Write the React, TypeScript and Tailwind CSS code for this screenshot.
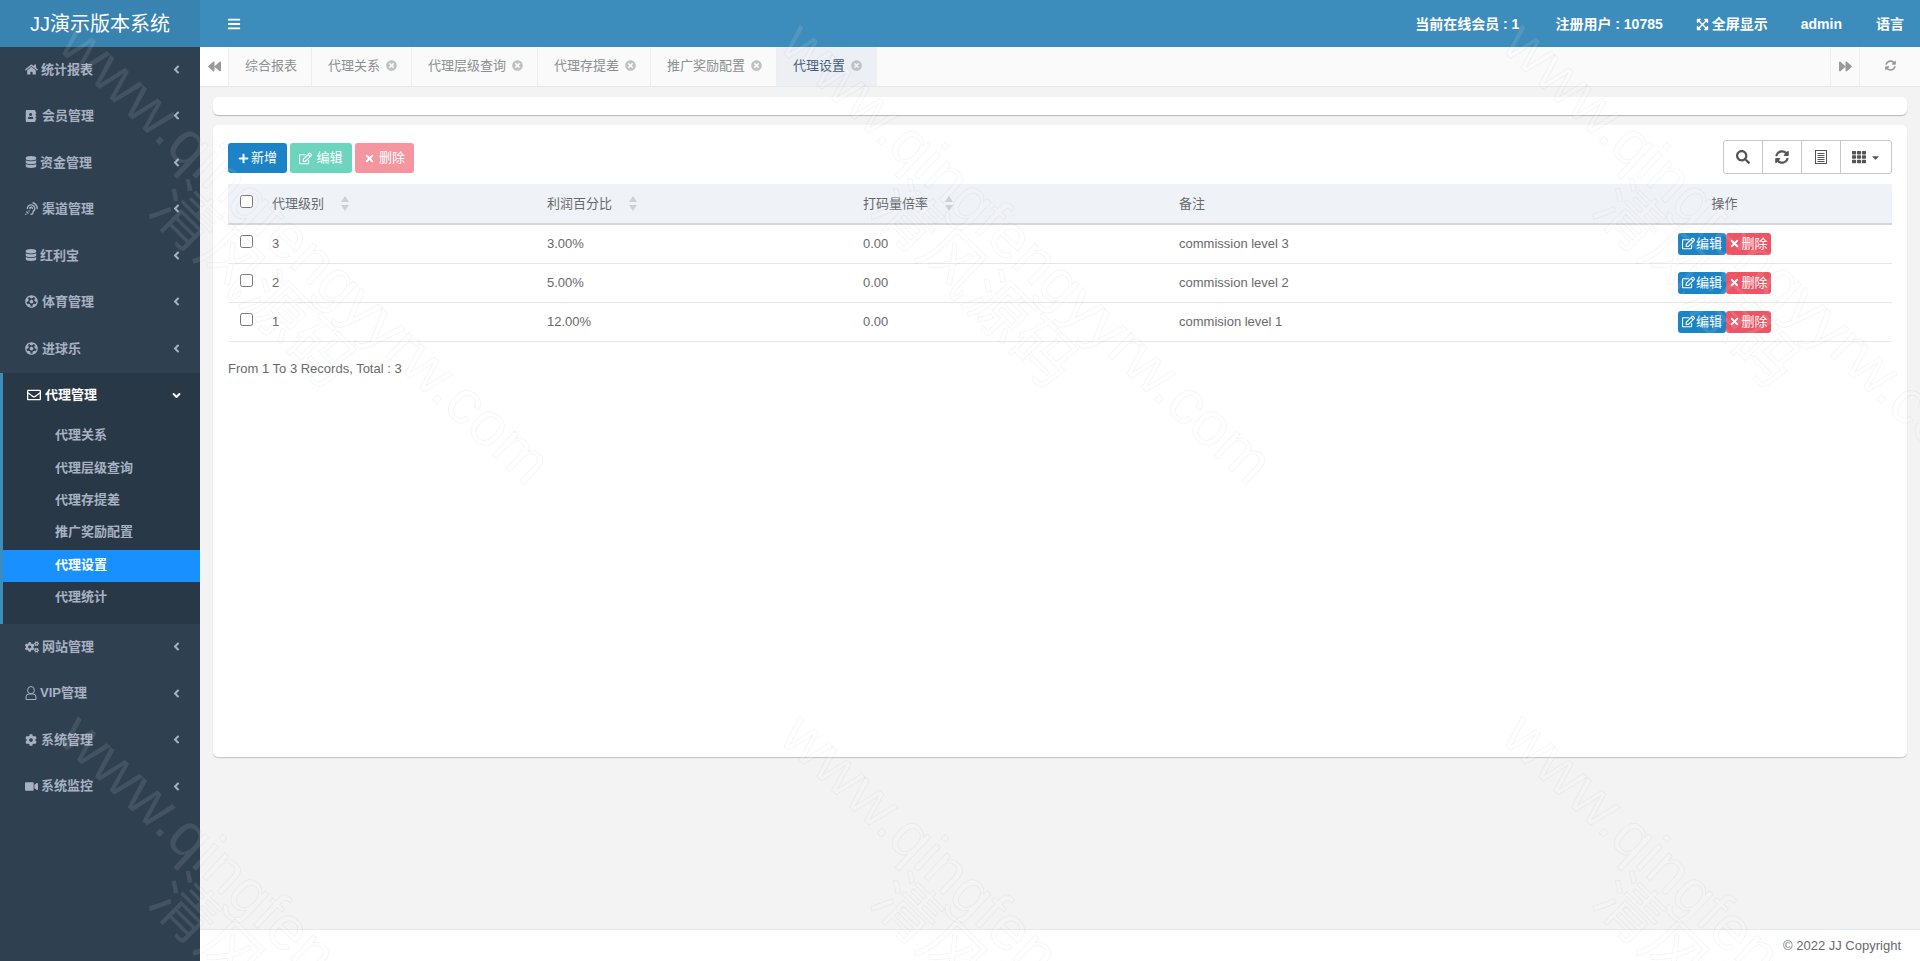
import type { ReactNode } from "react";
import {
  FaAddressBook,
  FaAngleDown,
  FaAngleLeft,
  FaAssistiveListeningSystems,
  FaBackward,
  FaBars,
  FaCaretDown,
  FaCog,
  FaCogs,
  FaDatabase,
  FaExpandArrowsAlt,
  FaForward,
  FaFutbol,
  FaHome,
  FaPlus,
  FaRegEdit,
  FaRegEnvelope,
  FaSearch,
  FaSyncAlt,
  FaTh,
  FaTimes,
  FaTimesCircle,
  FaVideo,
} from "react-icons/fa";

function UserIcon() {
  return (
    <svg width="12" height="14" viewBox="0 0 12 14" fill="none" stroke="currentColor" strokeWidth="1">
      <ellipse cx="6" cy="4.2" rx="3.4" ry="3.7" />
      <path d="M1 13.5V11a3 3 0 0 1 3-3h4a3 3 0 0 1 3 3v2.5z" />
    </svg>
  );
}

function ListIcon() {
  return (
    <svg width="14" height="14" viewBox="0 0 14 14" fill="none" stroke="currentColor" strokeWidth="1">
      <rect x="1.5" y="0.5" width="11" height="13" />
      <path d="M3.5 3.5h7M3.5 5.5h7M3.5 7.5h7M3.5 9.5h7M3.5 11.5h7" />
    </svg>
  );
}

const menuTop = [
  { label: "统计报表", icon: <FaHome size={13} />, gap: "gap-[3px]" },
  { label: "会员管理", icon: <FaAddressBook size={12} />, gap: "gap-[5px]" },
  { label: "资金管理", icon: <FaDatabase size={12} />, gap: "gap-[3px]" },
  { label: "渠道管理", icon: <FaAssistiveListeningSystems size={13} />, gap: "gap-[4px]" },
  { label: "红利宝", icon: <FaDatabase size={12} />, gap: "gap-[3px]" },
  { label: "体育管理", icon: <FaFutbol size={13} />, gap: "gap-[4px]" },
  { label: "进球乐", icon: <FaFutbol size={13} />, gap: "gap-[4px]" },
];

const menuBottom = [
  { label: "网站管理", icon: <FaCogs size={14} />, gap: "gap-[3px]" },
  { label: "VIP管理", icon: <UserIcon />, gap: "gap-[3px]" },
  { label: "系统管理", icon: <FaCog size={12} />, gap: "gap-[4px]" },
  { label: "系统监控", icon: <FaVideo size={13} />, gap: "gap-[3px]" },
];

const subMenu = ["代理关系", "代理层级查询", "代理存提差", "推广奖励配置", "代理设置", "代理统计"];

const tabs = [
  { label: "综合报表", closable: false },
  { label: "代理关系", closable: true },
  { label: "代理层级查询", closable: true },
  { label: "代理存提差", closable: true },
  { label: "推广奖励配置", closable: true },
  { label: "代理设置", closable: true, active: true },
];

const rows = [
  { level: "3", profit: "3.00%", rate: "0.00", note: "commission level 3" },
  { level: "2", profit: "5.00%", rate: "0.00", note: "commission level 2" },
  { level: "1", profit: "12.00%", rate: "0.00", note: "commision level 1" },
];

function SortIcon() {
  return (
    <svg width="8" height="15" viewBox="0 0 8 15" className="fill-[#ccd1d8]">
      <path d="M4 0 8 6H0z" />
      <path d="M4 15 0 9h8z" />
    </svg>
  );
}

function MenuItem({ label, icon, gap }: { label: string; icon: ReactNode; gap: string }) {
  return (
    <div className="flex h-[46.5px] items-center pb-[2px] pl-[25px] pr-[17px] text-[13px] font-semibold text-[#a7b1c2]">
      <span className={`flex items-center ${gap}`}>
        {icon}
        {label}
      </span>
      <FaAngleLeft size={13} className="ml-auto" />
    </div>
  );
}

function Sidebar() {
  return (
    <aside className="w-[200px] shrink-0 bg-[#2f4050]">
      {menuTop.map((m) => (
        <MenuItem key={m.label} {...m} />
      ))}
      <div className="border-l-[3px] border-[#3c8dbc] bg-[#293846] pb-[10px]">
        <div className="flex h-[48px] items-center pb-[3px] pl-[24px] pr-[17px] text-[13px] font-bold text-white">
          <FaRegEnvelope size={14} className="mr-[4px]" />
          代理管理
          <FaAngleDown size={13} className="ml-auto" />
        </div>
        {subMenu.map((s) =>
          s === "代理设置" ? (
            <div key={s} className="flex h-[32.3px] items-center pb-[2px] bg-[#1890ff] pl-[52px] text-[13px] font-bold text-white">
              {s}
            </div>
          ) : (
            <div key={s} className="flex h-[32.3px] items-center pb-[3px] pl-[52px] text-[13px] font-semibold text-[#a7b1c2]">
              {s}
            </div>
          )
        )}
      </div>
      {menuBottom.map((m) => (
        <MenuItem key={m.label} {...m} />
      ))}
    </aside>
  );
}

function TabBar() {
  return (
    <div className="flex h-[40px] shrink-0 border-b border-[#e7e7e7] bg-[#fafafa] text-[13px] text-[#8a8f94]">
      <div className="flex w-[29px] items-center justify-center border-r border-[#eeeeee] bg-white text-[#999]">
        <FaBackward size={13} />
      </div>
      {tabs.map((t) =>
        t.active ? (
          <div key={t.label} className="flex items-center gap-[6px] bg-[#ecf0f5] pb-[2px] pl-[16px] pr-[15px] text-[#3d5a78]">
            {t.label}
            <FaTimesCircle size={11} className="text-[#bcc2c8]" />
          </div>
        ) : (
          <div key={t.label} className="flex items-center gap-[6px] border-r border-[#eeeeee] pb-[2px] pl-[16px] pr-[14px]">
            {t.label}
            {t.closable && <FaTimesCircle size={11} className="text-[#bcc2c8]" />}
          </div>
        )
      )}
      <div className="ml-auto flex w-[30px] items-center justify-center border-x border-[#eeeeee] text-[#999]">
        <FaForward size={13} />
      </div>
      <div className="flex w-[60px] items-center justify-center pb-[2px] text-[#999]">
        <FaSyncAlt size={11} />
      </div>
    </div>
  );
}

function Toolbar() {
  return (
    <div className="flex h-[34px] items-stretch rounded-[3px] border border-[#c8c8c8] text-[#555]">
      <div className="flex w-[39px] items-center justify-center border-r border-[#c8c8c8]">
        <FaSearch size={14} />
      </div>
      <div className="flex w-[39px] items-center justify-center border-r border-[#c8c8c8]">
        <FaSyncAlt size={14} />
      </div>
      <div className="flex w-[39px] items-center justify-center border-r border-[#c8c8c8]">
        <ListIcon />
      </div>
      <div className="flex w-[50px] items-center justify-center gap-[4px]">
        <FaTh size={14} />
        <FaCaretDown size={11} />
      </div>
    </div>
  );
}

function DataTable() {
  return (
    <table className="mt-[10px] w-full table-fixed border-collapse text-[13px] text-[#676a6c]">
      <colgroup>
        <col className="w-[32px]" />
        <col className="w-[275px]" />
        <col className="w-[316px]" />
        <col className="w-[316px]" />
        <col className="w-[390px]" />
        <col />
      </colgroup>
      <thead>
        <tr className="h-[40px] border-b-2 border-[#d4d6d8] bg-[#eff2f7] text-left">
          <th className="pl-[12px] pb-[4px] font-normal">
            <input type="checkbox" className="block size-[13px]" />
          </th>
          <th className="px-[12px] font-normal">
            <span className="flex items-center gap-[17px]">代理级别<SortIcon /></span>
          </th>
          <th className="px-[12px] font-normal">
            <span className="flex items-center gap-[17px]">利润百分比<SortIcon /></span>
          </th>
          <th className="px-[12px] font-normal">
            <span className="flex items-center gap-[17px]">打码量倍率<SortIcon /></span>
          </th>
          <th className="px-[12px] font-normal">备注</th>
          <th className="px-[12px] text-center font-normal">操作</th>
        </tr>
      </thead>
      <tbody>
        {rows.map((r) => (
          <tr key={r.level} className="h-[39px] border-b border-[#e7e7e7]">
            <td className="pl-[12px] pb-[4px]">
              <input type="checkbox" className="block size-[13px]" />
            </td>
            <td className="px-[12px]">{r.level}</td>
            <td className="px-[12px]">{r.profit}</td>
            <td className="px-[12px]">{r.rate}</td>
            <td className="px-[12px]">{r.note}</td>
            <td className="px-[12px]">
              <div className="flex justify-center text-white">
                <span className="flex h-[22px] w-[48px] items-center justify-center gap-[1px] rounded-[3px] bg-[#1c84c6]">
                  <FaRegEdit size={13} />编辑
                </span>
                <span className="flex h-[22px] w-[45px] items-center justify-center gap-[1px] rounded-[3px] bg-[#ed5565]">
                  <FaTimes size={11} />删除
                </span>
              </div>
            </td>
          </tr>
        ))}
      </tbody>
    </table>
  );
}

function Watermark() {
  const tiles = [0, 1, 2, 3, 4, 5];
  return (
    <div className="pointer-events-none absolute inset-0 grid grid-cols-[repeat(3,722px)] grid-rows-[repeat(2,692px)] overflow-hidden">
      {tiles.map((t) => (
        <div key={t} className="relative">
          <span className="absolute left-[91px] top-[10px] origin-top-left rotate-[43deg] whitespace-nowrap text-[62px] leading-none text-white/10 [-webkit-text-stroke:1px_rgba(0,0,0,0.045)]">
            www.qingfengyyrw.com
          </span>
          <span className="absolute left-[185px] top-[172px] origin-top-left rotate-[45deg] whitespace-nowrap text-[64px] leading-none text-white/10 [-webkit-text-stroke:1px_rgba(0,0,0,0.045)]">
            清风源码
          </span>
        </div>
      ))}
    </div>
  );
}

export default function App() {
  return (
    <div className="relative flex h-[961px] flex-col overflow-hidden bg-[#f3f3f4] font-['Liberation_Sans','Noto_Sans_CJK_SC',sans-serif]">
      <header className="flex h-[47px] shrink-0 items-center bg-[#3c8dbc] text-white">
        <div className="flex h-full w-[200px] items-center justify-center bg-[#3883b0] text-[20px]">JJ演示版本系统</div>
        <FaBars size={14} className="ml-[27px]" />
        <div className="ml-auto flex items-center pr-[16px] pt-[2px] text-[14px] font-bold">
          <span>当前在线会员 : 1</span>
          <span className="ml-[36px]">注册用户 : 10785</span>
          <span className="ml-[33px] flex items-center gap-[3px]">
            <FaExpandArrowsAlt size={13} />全屏显示
          </span>
          <span className="ml-[33px]">admin</span>
          <span className="ml-[34px]">语言</span>
        </div>
      </header>
      <div className="flex min-h-0 flex-1">
        <Sidebar />
        <main className="flex min-w-0 flex-1 flex-col">
          <TabBar />
          <div className="flex flex-1 flex-col gap-[10px] pl-[13px] pr-[13px] pt-[10px]">
            <div className="h-[18px] rounded-[5px] bg-white shadow-[0_1px_1px_rgba(0,0,0,0.25)]" />
            <section className="h-[632px] rounded-[5px] bg-white px-[15px] pt-[15px] shadow-[0_1px_1px_rgba(0,0,0,0.2)]">
              <div className="flex items-center">
                <div className="flex gap-[3px] pt-[2px] text-[13px] text-white">
                  <span className="flex h-[30px] w-[59px] items-center justify-center gap-[2px] rounded-[3px] bg-[#1c84c6]">
                    <FaPlus size={11} />新增
                  </span>
                  <span className="flex h-[30px] w-[62px] items-center justify-center gap-[4px] rounded-[3px] bg-[#6dd4bd]">
                    <FaRegEdit size={13} />编辑
                  </span>
                  <span className="flex h-[30px] w-[59px] items-center justify-center gap-[4px] rounded-[3px] bg-[#f4959f]">
                    <FaTimes size={11} />删除
                  </span>
                </div>
                <div className="ml-auto">
                  <Toolbar />
                </div>
              </div>
              <DataTable />
              <div className="mt-[17px] text-[13px] text-[#676a6c]">From 1 To 3 Records, Total : 3</div>
            </section>
          </div>
          <footer className="flex h-[32px] shrink-0 items-center justify-end border-t border-[#e7eaec] bg-white pr-[19px] text-[13px] text-[#676a6c]">
            © 2022 JJ Copyright
          </footer>
        </main>
      </div>
      <Watermark />
    </div>
  );
}
